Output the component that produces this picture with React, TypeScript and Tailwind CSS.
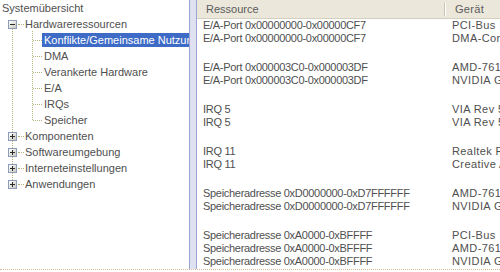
import React from "react";

type TreeNode = {
  label: string;
  level: 0 | 1 | 2;
  box?: "plus" | "minus";
  selected?: boolean;
};

const tree: TreeNode[] = [
  { label: "Systemübersicht", level: 0 },
  { label: "Hardwareressourcen", level: 1, box: "minus" },
  { label: "Konflikte/Gemeinsame Nutzung", level: 2, selected: true },
  { label: "DMA", level: 2 },
  { label: "Verankerte Hardware", level: 2 },
  { label: "E/A", level: 2 },
  { label: "IRQs", level: 2 },
  { label: "Speicher", level: 2 },
  { label: "Komponenten", level: 1, box: "plus" },
  { label: "Softwareumgebung", level: 1, box: "plus" },
  { label: "Interneteinstellungen", level: 1, box: "plus" },
  { label: "Anwendungen", level: 1, box: "plus" },
];

const rows: [string, string][][] = [
  [
    ["E/A-Port 0x00000000-0x00000CF7", "PCI-Bus"],
    ["E/A-Port 0x00000000-0x00000CF7", "DMA-Controller"],
  ],
  [
    ["E/A-Port 0x000003C0-0x000003DF", "AMD-761 AGP-Controller"],
    ["E/A-Port 0x000003C0-0x000003DF", "NVIDIA GeForce2 GTS"],
  ],
  [
    ["IRQ 5", "VIA Rev 5 oder höher USB-Controller"],
    ["IRQ 5", "VIA Rev 5 oder höher USB-Controller"],
  ],
  [
    ["IRQ 11", "Realtek RTL8139-Netzwerkkarte"],
    ["IRQ 11", "Creative AudioPCI"],
  ],
  [
    ["Speicheradresse 0xD0000000-0xD7FFFFFF", "AMD-761 AGP-Controller"],
    ["Speicheradresse 0xD0000000-0xD7FFFFFF", "NVIDIA GeForce2 GTS"],
  ],
  [
    ["Speicheradresse 0xA0000-0xBFFFF", "PCI-Bus"],
    ["Speicheradresse 0xA0000-0xBFFFF", "AMD-761 AGP-Controller"],
    ["Speicheradresse 0xA0000-0xBFFFF", "NVIDIA GeForce2 GTS"],
  ],
];

function ExpandBox({ kind }: { kind: "plus" | "minus" }) {
  return (
    <div className="relative z-10 flex h-[9px] w-[9px] items-center justify-center border border-[#8e9cb8] bg-gradient-to-br from-white to-[#c9c9c0]">
      <div className="h-px w-[5px] bg-[#2a2a2a]" />
      {kind === "plus" && (
        <div className="absolute h-[5px] w-px bg-[#2a2a2a]" />
      )}
    </div>
  );
}

function TreeRow({ node }: { node: TreeNode }) {
  if (node.level === 0) {
    return (
      <div className="flex h-4 items-center pl-[2px]">
        <span>{node.label}</span>
      </div>
    );
  }
  if (node.level === 1) {
    return (
      <div className="flex h-4 items-center pl-[8px]">
        <ExpandBox kind={node.box ?? "plus"} />
        <div className="ml-px w-[6px] border-t border-dotted border-[#b4b47c]" />
        <span className="ml-[1px] whitespace-nowrap">{node.label}</span>
      </div>
    );
  }
  return (
    <div className="flex h-4 items-center pl-[33px]">
      <div className="w-[9px] border-t border-dotted border-[#b4b47c]" />
      <span
        className={
          node.selected
            ? "flex h-[14px] w-[147px] items-center overflow-hidden whitespace-nowrap bg-[#3d6bc6] pl-[2px] text-white"
            : "whitespace-nowrap pl-[2px]"
        }
      >
        {node.label}
      </span>
    </div>
  );
}

export default function App() {
  return (
    <div
      className="flex h-[272px] w-[500px] flex-col overflow-hidden bg-white text-[11px] leading-none text-[#4f4f4f]"
      style={{ fontFamily: '"Liberation Sans", Arial, sans-serif' }}
    >
      <div className="flex h-[270px] border-b border-dotted border-[#d8bc98]">
        {/* tree */}
        <div className="relative w-[189px] shrink-0 overflow-hidden">
          <div className="absolute left-[12px] top-[29px] h-[107px] border-l border-dotted border-[#b4b47c]" />
          <div className="absolute left-[12px] top-[136px] h-[48px] border-l border-dotted border-[#b4b47c]" />
          <div className="absolute left-[32px] top-[31px] h-[89px] border-l border-dotted border-[#b4b47c]" />
          {tree.map((node) => (
            <TreeRow key={node.label} node={node} />
          ))}
        </div>

        {/* splitter */}
        <div className="w-[8px] shrink-0 border-x border-[#9aa5d6] bg-[#dfe1f1]" />

        {/* list */}
        <div className="flex min-w-0 flex-1 flex-col overflow-hidden">
          <div className="flex h-[19px] shrink-0 items-center border-b border-[#d4d0bf] bg-[#ebe7da] text-[#5a5a5a]">
            <div className="flex h-full w-[247px] shrink-0 items-center pl-[9px]">
              Ressource
            </div>
            <div className="h-[13px] w-[2px] shrink-0 border-l border-[#c8c4b4] bg-white" />
            <div className="whitespace-nowrap pl-[9px] tracking-[0.3px]">Gerät</div>
          </div>
          <div className="flex flex-col">
            {rows.map((group, gi) => (
              <div key={gi} className="flex flex-col">
                {gi > 0 && <div className="h-[16px]" />}
                {group.map((r, ri) => (
                  <div key={ri} className="flex h-[13px] items-center">
                    <div className="w-[249px] shrink-0 whitespace-nowrap pl-[6px] tracking-[-0.3px]">
                      {r[0]}
                    </div>
                    <div className="whitespace-nowrap pl-[6px] tracking-[0.4px]">
                      {r[1]}
                    </div>
                  </div>
                ))}
              </div>
            ))}
          </div>
        </div>
      </div>
    </div>
  );
}
